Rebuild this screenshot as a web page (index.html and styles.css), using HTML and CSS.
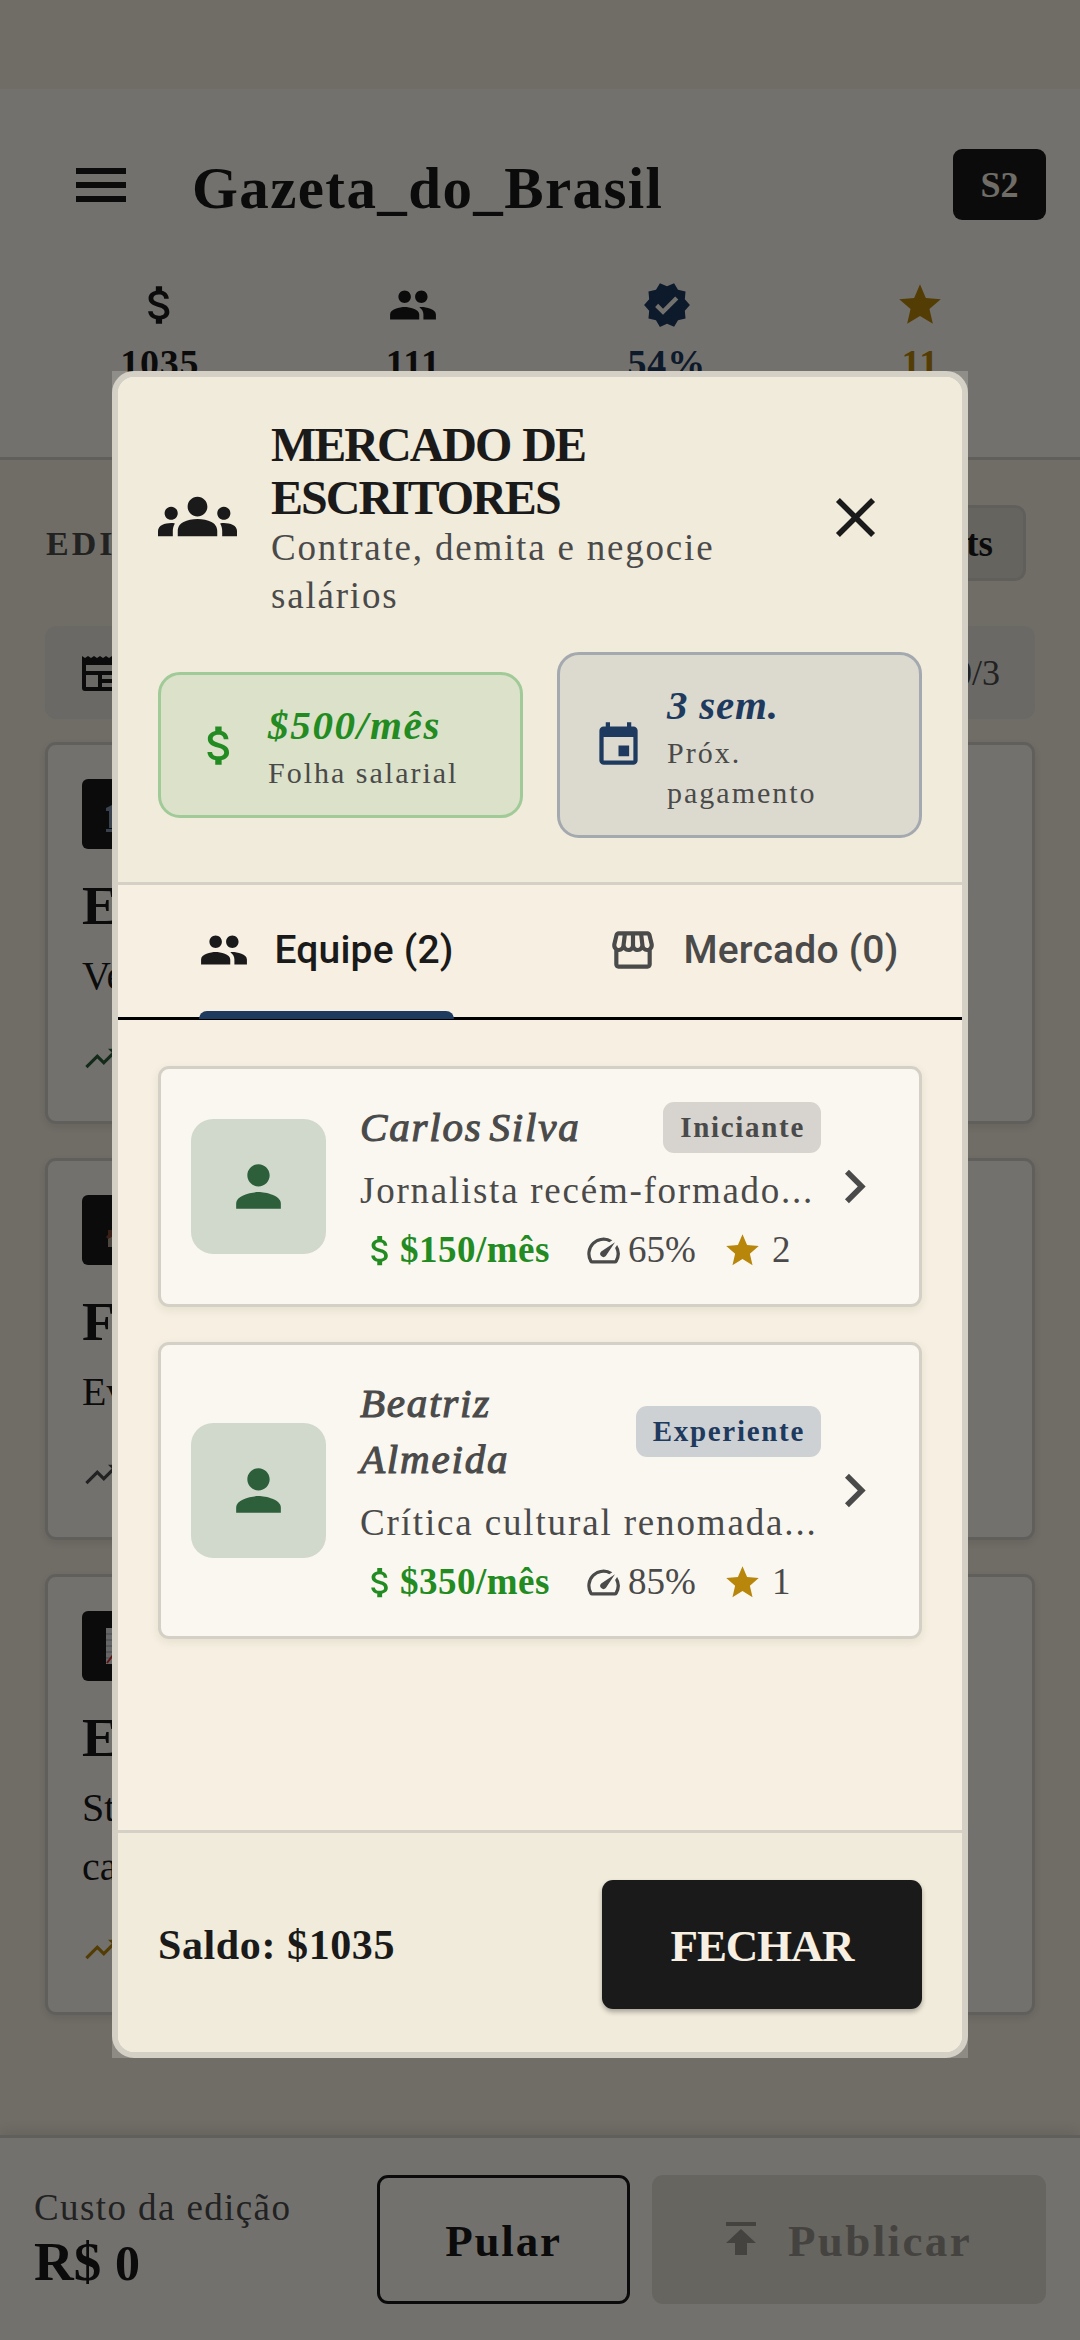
FILE: index.html
```html
<!DOCTYPE html>
<html lang="pt-BR">
<head>
    <meta charset="UTF-8">
    <meta name="viewport" content="width=device-width, initial-scale=1.0">
    <title>Gazeta do Brasil</title>
    <link rel="stylesheet" href="styles.css">
</head>
<body>
    <!-- shared icons -->
    <svg class="sprite" width="0" height="0">
        <symbol id="dollar" viewBox="0 0 24 24"><path d="M11.8 10.9c-2.27-.59-3-1.2-3-2.15 0-1.09 1.01-1.85 2.7-1.85 1.78 0 2.44.85 2.5 2.1h2.21c-.07-1.72-1.12-3.3-3.21-3.81V3h-3v2.16c-1.94.42-3.5 1.68-3.5 3.61 0 2.31 1.91 3.46 4.7 4.13 2.5.6 3 1.48 3 2.41 0 .69-.49 1.79-2.7 1.79-2.06 0-2.87-.92-2.98-2.1h-2.2c.12 2.19 1.76 3.42 3.68 3.83V21h3v-2.15c1.95-.37 3.5-1.5 3.5-3.55 0-2.84-2.43-3.81-4.7-4.4z"/></symbol>
        <symbol id="people" viewBox="0 0 24 24"><path d="M16 11c1.66 0 2.99-1.34 2.99-3S17.66 5 16 5s-3 1.34-3 3 1.34 3 3 3zm-8 0c1.66 0 2.99-1.34 2.99-3S9.66 5 8 5 5 6.34 5 8s1.34 3 3 3zm0 2c-2.33 0-7 1.17-7 3.5V19h14v-2.5c0-2.33-4.67-3.5-7-3.5zm8 0c-.29 0-.62.02-.97.05 1.16.84 1.97 1.97 1.97 3.45V19h6v-2.5c0-2.33-4.67-3.5-7-3.5z"/></symbol>
        <symbol id="star" viewBox="0 0 24 24"><path d="M12 17.27 18.18 21l-1.64-7.03L22 9.24l-7.19-.61L12 2 9.19 8.63 2 9.24l5.46 4.73L5.82 21z"/></symbol>
        <symbol id="trend" viewBox="0 0 24 24"><path d="m16 6 2.29 2.29-4.88 4.88-4-4L2 16.59 3.41 18l6-6 4 4 6.3-6.29L22 12V6z"/></symbol>
        <symbol id="person" viewBox="0 0 24 24"><path d="M12 12c2.21 0 4-1.79 4-4s-1.79-4-4-4-4 1.79-4 4 1.79 4 4 4zm0 2c-2.67 0-8 1.34-8 4v2h16v-2c0-2.66-5.33-4-8-4z"/></symbol>
        <symbol id="chevron" viewBox="0 0 24 24"><path d="M10 6 8.59 7.41 13.17 12l-4.58 4.59L10 18l6-6z"/></symbol>
        <symbol id="speed" viewBox="0 0 24 24"><path d="m20.38 8.57-1.23 1.85a8 8 0 0 1-.22 7.58H5.07A8 8 0 0 1 15.58 6.85l1.85-1.23A10 10 0 0 0 3.35 19a2 2 0 0 0 1.72 1h13.85a2 2 0 0 0 1.74-1 10 10 0 0 0-.27-10.44zm-9.79 6.84a2 2 0 0 0 2.83 0l5.66-8.49-8.49 5.66a2 2 0 0 0 0 2.83z"/></symbol>
    </svg>

    <div class="app">
        <header class="header">
            <div class="topbar">
                <svg class="menu" viewBox="0 0 50 34"><path d="M0 0h50v6H0zM0 14h50v6H0zM0 28h50v6H0z"/></svg>
                <h1>Gazeta_do_Brasil</h1>
                <span class="week">S2</span>
            </div>
            <div class="stats">
                <div class="stat"><svg class="icon"><use href="#dollar"/></svg><span>1035</span></div>
                <div class="stat"><svg class="icon"><use href="#people"/></svg><span>111</span></div>
                <div class="stat blue"><svg class="icon" viewBox="0 0 24 24"><path d="m23 12-2.44-2.79.34-3.69-3.61-.82-1.89-3.2L12 2.96 8.6 1.5 6.71 4.69 3.1 5.5l.34 3.7L1 12l2.44 2.79-.34 3.7 3.61.82L8.6 22.5l3.4-1.47 3.4 1.46 1.89-3.19 3.61-.82-.34-3.69zm-12.91 4.72-3.8-3.81 1.48-1.48 2.32 2.33 5.85-5.87 1.48 1.48z"/></svg><span>54%</span></div>
                <div class="stat gold"><svg class="icon"><use href="#star"/></svg><span>11</span></div>
            </div>
        </header>

        <main class="content">
            <div class="section-head">
                <h2>EDI</h2>
                <span class="drafts">ts</span>
            </div>
            <div class="counter">
                <svg viewBox="0 0 36 36"><path fill-rule="evenodd" d="M0 1l3 2 3-2 3 2 3-2 3 2 3-2 3 2 3-2 3 2 3-2 3 2 3-2v32a3 3 0 0 1-3 3H3a3 3 0 0 1-3-3zM4 10v6h28v-6zM4 20v12h12V20zM20 20v4h12v-4zM20 28v4h12v-4z"/></svg>
                <span>0/3</span>
            </div>
            <article class="story">
                <div class="tag"><svg viewBox="0 0 36 36"><path fill="#7f93a8" d="M0 12 18 3l18 9v3H0zM3 15h7v17H3zM26 15h7v17h-7zM0 33h36v3H0z"/></svg></div>
                <h3>E</h3>
                <p>Ve</p>
                <svg class="trend up"><use href="#trend"/></svg>
            </article>
            <article class="story">
                <div class="tag"><svg viewBox="0 0 36 36"><path fill="#a89c90" d="M2 24h32v11H2z"/><path fill="#7d4630" d="M0 25 10 14h16l10 11-3 2-15-9L2 27zM2 18h4v5H2z"/></svg></div>
                <h3>F</h3>
                <p>Ev</p>
                <svg class="trend flat"><use href="#trend"/></svg>
            </article>
            <article class="story">
                <div class="tag"><svg viewBox="0 0 36 36"><path fill="#e0e0e0" d="M0 0h36v36H0z"/><path fill="none" stroke="#8fa0a8" d="M0 6h36M0 12h36M0 18h36M0 24h36M0 30h36"/><path fill="none" stroke="#d02828" stroke-width="2" d="m1 35 9-12"/></svg></div>
                <h3>E</h3>
                <p>St<br>ca</p>
                <svg class="trend gold"><use href="#trend"/></svg>
            </article>
        </main>

        <footer class="bottombar">
            <div class="cost">
                <span class="cost-label">Custo da edição</span>
                <strong>R$ <span class="oldstyle">0</span></strong>
            </div>
            <button class="btn skip">Pular</button>
            <button class="btn publish">
                <svg class="upload" viewBox="0 0 30 33"><path d="M0 0h30v4H0zM15 7 0 21h9v12h12V21h9z"/></svg>
                <span>Publicar</span>
            </button>
        </footer>
    </div>

    <div class="overlay">
        <div class="modal-frame">
            <section class="modal">
                <div class="modal-header">
                    <div class="modal-title">
                        <svg class="groups" viewBox="0 0 24 24"><path d="M12 12.75c1.63 0 3.07.39 4.24.9 1.08.48 1.76 1.56 1.76 2.73V18H6v-1.61c0-1.18.68-2.26 1.76-2.73 1.17-.52 2.61-.91 4.24-.91zM4 13c1.1 0 2-.9 2-2s-.9-2-2-2-2 .9-2 2 .9 2 2 2zm1.13 1.1c-.37-.06-.74-.1-1.13-.1-.99 0-1.93.21-2.78.58C.48 14.9 0 15.62 0 16.43V18h4.5v-1.61c0-.83.23-1.61.63-2.29zM20 13c1.1 0 2-.9 2-2s-.9-2-2-2-2 .9-2 2 .9 2 2 2zm4 3.43c0-.81-.48-1.53-1.22-1.85-.85-.37-1.79-.58-2.78-.58-.39 0-.76.04-1.13.1.4.68.63 1.46.63 2.29V18H24zM12 6c1.66 0 3 1.34 3 3s-1.34 3-3 3-3-1.34-3-3 1.34-3 3-3z"/></svg>
                        <div class="heading">
                            <h2>MERCADO DE<br>ESCRITORES</h2>
                            <p>Contrate, demita e negocie<br>salários</p>
                        </div>
                        <svg class="close" viewBox="0 0 24 24"><path d="M19 6.41 17.59 5 12 10.59 6.41 5 5 6.41 10.59 12 5 17.59 6.41 19 12 13.41 17.59 19 19 17.59 13.41 12z"/></svg>
                    </div>
                    <div class="boxes">
                        <div class="box payroll">
                            <svg><use href="#dollar"/></svg>
                            <div><strong>$500/mês</strong><small>Folha salarial</small></div>
                        </div>
                        <div class="box payday">
                            <svg viewBox="0 0 24 24"><path d="M17 12h-5v5h5v-5zM16 1v2H8V1H6v2H5c-1.11 0-1.99.9-1.99 2L3 19c0 1.1.89 2 2 2h14c1.1 0 2-.9 2-2V5c0-1.1-.9-2-2-2h-1V1h-2zm3 18H5V8h14v11z"/></svg>
                            <div><strong>3 sem.</strong><small>Próx.<br>pagamento</small></div>
                        </div>
                    </div>
                </div>

                <nav class="tabs">
                    <div class="tab active"><svg><use href="#people"/></svg><span>Equipe (2)</span></div>
                    <div class="tab"><svg viewBox="0 0 24 24"><path d="M21.9 8.89l-1.05-4.37c-.22-.9-1-1.52-1.91-1.52H5.05c-.9 0-1.69.63-1.9 1.52L2.1 8.89c-.24 1.02-.02 2.06.62 2.88.08.11.19.19.28.29V19c0 1.1.9 2 2 2h14c1.1 0 2-.9 2-2v-6.94c.09-.09.2-.18.28-.28.64-.82.87-1.87.62-2.89zm-2.99-3.9 1.05 4.37c.1.42.01.84-.25 1.17-.14.18-.44.47-.94.47-.61 0-1.14-.49-1.21-1.14L16.98 5l1.93-.01zM13 5h1.96l.54 4.52c.05.39-.07.78-.33 1.07-.22.26-.54.41-.95.41-.67 0-1.22-.59-1.22-1.31V5zM8.49 9.52 9.04 5H11v4.69c0 .72-.55 1.31-1.29 1.31-.34 0-.65-.15-.89-.41-.25-.29-.37-.68-.33-1.07zm-4.45-.16L5.05 5h1.97l-.58 4.86c-.08.65-.6 1.14-1.21 1.14-.49 0-.8-.29-.93-.47-.27-.32-.36-.75-.26-1.17zM5 19v-6.03c.08.01.15.03.23.03.87 0 1.66-.36 2.24-.95.6.6 1.4.95 2.31.95.87 0 1.65-.36 2.23-.93.59.57 1.39.93 2.29.93.84 0 1.64-.35 2.24-.95.58.59 1.37.95 2.24.95.08 0 .15-.02.23-.03V19H5z"/></svg><span>Mercado (0)</span></div>
                </nav>

                <div class="writers">
                    <div class="writer">
                        <div class="avatar"><svg><use href="#person"/></svg></div>
                        <div class="info">
                            <div class="name-row"><h3>Carlos Silva</h3><span class="chip">Iniciante</span></div>
                            <p>Jornalista recém-formado...</p>
                            <div class="meta">
                                <svg class="pay-icon"><use href="#dollar"/></svg><b>$150/mês</b>
                                <svg class="speed-icon"><use href="#speed"/></svg><span class="skill">65%</span>
                                <svg class="star-icon"><use href="#star"/></svg><span>2</span>
                            </div>
                        </div>
                        <svg class="chevron"><use href="#chevron"/></svg>
                    </div>
                    <div class="writer">
                        <div class="avatar"><svg><use href="#person"/></svg></div>
                        <div class="info">
                            <div class="name-row"><h3>Beatriz<br>Almeida</h3><span class="chip senior">Experiente</span></div>
                            <p class="critic">Crítica cultural renomada...</p>
                            <div class="meta">
                                <svg class="pay-icon"><use href="#dollar"/></svg><b>$350/mês</b>
                                <svg class="speed-icon"><use href="#speed"/></svg><span class="skill">85%</span>
                                <svg class="star-icon"><use href="#star"/></svg><span>1</span>
                            </div>
                        </div>
                        <svg class="chevron"><use href="#chevron"/></svg>
                    </div>
                </div>

                <div class="modal-footer">
                    <span class="balance">Saldo: $1035</span>
                    <button class="btn close-btn">FECHAR</button>
                </div>
            </section>
        </div>
    </div>
</body>
</html>
```

FILE: styles.css
```css
* {
    box-sizing: border-box;
    margin: 0;
    padding: 0;
}

body {
    position: relative;
    width: 1080px;
    height: 2340px;
    overflow: hidden;
    background-color: #f5eee1;
    color: #1a1a1a;
    font-family: "Liberation Serif", serif;
    white-space: nowrap;
}

svg {
    display: block;
    flex: none;
    fill: currentColor;
}

.sprite {
    position: absolute;
}

.blue { color: #1e3a5f; }
.gold { color: #b8860b; }

.app {
    display: flex;
    flex-direction: column;
    height: 2340px;
    padding-top: 89px;
}

/* header */
.header {
    height: 371px;
    background-color: #faf7f0;
    border-bottom: 3px solid #d4d0c8;
}

.topbar {
    display: flex;
    align-items: center;
    height: 191px;
    padding: 0 34px 0 76px;
}

.menu {
    width: 50px;
    height: 34px;
}

.topbar h1 {
    margin-left: 66px;
    padding-top: 6px;
    font-size: 59px;
    line-height: 70px;
    letter-spacing: 1.4px;
}

.week {
    width: 93px;
    height: 71px;
    margin-left: auto;
    border-radius: 9px;
    background-color: #1a1a1a;
    color: #f5eee1;
    font-size: 36px;
    font-weight: bold;
    line-height: 73px;
    text-align: center;
}

.stats {
    display: grid;
    grid-template-columns: repeat(4, 1fr);
    padding: 0 33px;
}

.stat {
    display: flex;
    flex-direction: column;
    align-items: center;
}

.icon {
    width: 50px;
    height: 50px;
}

.stat span {
    margin-top: 9px;
    font-size: 38px;
    font-weight: bold;
    line-height: 48px;
    letter-spacing: 0.8px;
}

/* edition screen */
.content {
    flex: 1;
    padding: 45px 45px 0;
}

.section-head {
    display: flex;
    justify-content: space-between;
    align-items: center;
    height: 76px;
    margin-bottom: 45px;
    padding: 0 9px 0 1px;
}

.section-head h2 {
    padding-top: 2px;
    color: #4a4a4a;
    font-size: 34px;
    letter-spacing: 3px;
}

.drafts {
    width: 190px;
    height: 76px;
    padding-right: 30px;
    border: 3px solid #d4d0c8;
    border-radius: 11px;
    background-color: #dedad0;
    font-size: 37px;
    font-weight: bold;
    line-height: 72px;
    text-align: right;
}

.counter {
    display: flex;
    justify-content: space-between;
    align-items: center;
    height: 93px;
    margin-bottom: 23px;
    padding: 0 35px 0 37px;
    border-radius: 11px;
    background-color: #e8e4dc;
    color: #4a4a4a;
    font-size: 36px;
}

.counter svg {
    width: 36px;
    height: 36px;
    color: #1a1a1a;
}

.story {
    height: 382px;
    margin-bottom: 34px;
    padding: 34px;
    border: 3px solid #d4d0c8;
    border-radius: 11px;
    background-color: #faf7f0;
    box-shadow: 0 3px 11px rgba(0, 0, 0, 0.1);
}

.story:last-child {
    height: 441px;
}

.tag {
    display: flex;
    align-items: center;
    width: 160px;
    height: 70px;
    padding-left: 24px;
    border-radius: 6px;
    background-color: #1a1a1a;
}

.tag svg {
    width: 36px;
    height: 36px;
}

.story h3 {
    margin-top: 27px;
    font-size: 55px;
    line-height: 60px;
}

.story p {
    margin-top: 10px;
    font-size: 40px;
    line-height: 59px;
}

.trend {
    width: 39px;
    height: 39px;
    margin-top: 34px;
}

.trend.up { color: #2d5f3a; }
.trend.flat { color: #4a4a4a; }

/* bottom bar */
.bottombar {
    display: flex;
    height: 205px;
    padding: 37px 34px 0;
    border-top: 3px solid #d4d0c8;
    background-color: #faf7f0;
    box-shadow: 0 -4px 16px rgba(0, 0, 0, 0.1);
}

.cost {
    display: flex;
    flex-direction: column;
    width: 343px;
}

.cost-label {
    padding-top: 9px;
    color: #4a4a4a;
    font-size: 37px;
    line-height: 48px;
    letter-spacing: 1.4px;
}

.cost strong {
    font-size: 55px;
    line-height: 60px;
}

.oldstyle {
    font-size: 50px;
    line-height: 1;
}

.btn {
    display: flex;
    justify-content: center;
    align-items: center;
    height: 129px;
    padding-top: 2px;
    border: none;
    border-radius: 11px;
    font: bold 45px/60px "Liberation Serif", serif;
}

.skip {
    width: 253px;
    margin-right: 22px;
    border: 3px solid #1a1a1a;
    background: none;
    color: #1a1a1a;
    letter-spacing: 1.8px;
}

.publish {
    width: 394px;
    gap: 32px;
    background-color: #e0dcd2;
    color: #96938d;
    letter-spacing: 2.4px;
}

.upload {
    width: 30px;
    height: 33px;
    margin-bottom: 4px;
}

/* writers market dialog */
.overlay {
    position: absolute;
    top: 0;
    left: 0;
    width: 1080px;
    height: 2340px;
    padding: 371px 112px 0;
    background-color: rgba(0, 0, 0, 0.54);
}

.modal-frame {
    width: 856px;
    height: 1687px;
    background-color: rgba(212, 208, 200, 0.3);
}

.modal {
    display: flex;
    flex-direction: column;
    height: 100%;
    overflow: hidden;
    border: 6px solid #d4d0c6;
    border-radius: 22px;
    background-color: #f6efe2;
}

.modal-header {
    height: 508px;
    padding: 41px 40px 0;
    border-bottom: 3px solid #d4d0c6;
    background-color: #f1ebdb;
}

.modal-title {
    display: flex;
    align-items: center;
}

.groups {
    width: 79px;
    height: 79px;
    margin-bottom: 5px;
}

.heading {
    width: 530px;
    margin-left: 34px;
}

.heading h2 {
    font-size: 48px;
    line-height: 53px;
    letter-spacing: -2px;
    word-spacing: 2px;
}

.heading p {
    color: #4a4a4a;
    font-size: 37px;
    line-height: 48px;
    letter-spacing: 1.8px;
}

.close {
    width: 67px;
    height: 67px;
    margin-bottom: 4px;
    margin-left: 21px;
}

.boxes {
    display: flex;
    align-items: center;
    gap: 34px;
    margin-top: 32px;
}

.box {
    display: flex;
    align-items: center;
    width: 365px;
    height: 146px;
    padding-left: 33px;
    border: 3px solid #a0ca97;
    border-radius: 22px;
    background-color: #dce1c9;
    color: #228b22;
}

.box svg {
    width: 51px;
    height: 51px;
    margin-right: 23px;
}

.box strong {
    display: block;
    font-size: 41px;
    font-style: italic;
    line-height: 56px;
    letter-spacing: 1.7px;
}

.box small {
    display: block;
    color: #4a4a4a;
    font-size: 30px;
    line-height: 40px;
    letter-spacing: 2px;
}

.payday {
    height: 186px;
    border-color: #a3a9ae;
    background-color: #dcdace;
    color: #1e3a5f;
}

.payday strong {
    letter-spacing: 0.8px;
}

.tabs {
    display: flex;
    height: 135px;
    border-bottom: 3px solid #000;
}

.tab {
    display: flex;
    justify-content: center;
    align-items: center;
    gap: 25px;
    width: 422px;
    padding: 0 0 3px 5px;
    color: #4a4a4a;
    font-family: Roboto, sans-serif;
    font-size: 39px;
    font-weight: 500;
    letter-spacing: 0.2px;
}

.tab svg {
    width: 50px;
    height: 50px;
}

.tab.active {
    position: relative;
    padding: 0 5px 3px 0;
    color: #1a1a1a;
}

.tab.active::after {
    content: "";
    position: absolute;
    bottom: -2px;
    left: 81px;
    width: 255px;
    height: 8px;
    border-radius: 8px 8px 0 0;
    background-color: #1e3a5f;
}

.writers {
    flex: 1;
    padding: 46px 40px 0;
}

.writer {
    display: flex;
    align-items: center;
    margin-bottom: 35px;
    padding: 30px;
    border: 3px solid #d4d0c6;
    border-radius: 11px;
    background-color: #faf7f0;
    box-shadow: 0 3px 10px rgba(60, 80, 0, 0.09);
}

.avatar {
    display: flex;
    justify-content: center;
    align-items: center;
    width: 135px;
    height: 135px;
    border-radius: 22px;
    background-color: #d1d9cc;
    color: #2d5f3a;
}

.avatar svg {
    width: 67px;
    height: 67px;
}

.info {
    width: 461px;
    margin-left: 34px;
    color: #4a4a4a;
}

.name-row {
    display: flex;
    justify-content: space-between;
    align-items: center;
    margin-bottom: 12px;
}

.name-row h3 {
    font-size: 41px;
    font-style: italic;
    font-weight: normal;
    line-height: 56px;
    letter-spacing: 1.8px;
    word-spacing: -5px;
    -webkit-text-stroke: 1.1px #4a4a4a;
}

.chip {
    padding: 0 16px 0 17px;
    border-radius: 11px;
    background-color: #d7d4cf;
    font-size: 29px;
    font-weight: bold;
    line-height: 51px;
    letter-spacing: 1.7px;
}

.senior {
    background-color: #ced1d4;
    color: #1e3a5f;
}

.info p {
    margin-bottom: 11px;
    font-size: 37px;
    line-height: 48px;
    letter-spacing: 1.75px;
}

.info .critic {
    letter-spacing: 1.85px;
}

.meta {
    display: flex;
    align-items: center;
    height: 48px;
    padding-left: 1px;
    font-size: 37px;
    line-height: 48px;
}

.pay-icon,
.speed-icon,
.star-icon {
    width: 39px;
    height: 39px;
}

.pay-icon,
.meta b {
    color: #228b22;
}

.meta b {
    letter-spacing: 0.5px;
}

.speed-icon {
    margin-left: 34px;
    margin-right: 5px;
}

.skill {
    width: 95px;
}

.star-icon {
    margin-right: 10px;
    color: #b8860b;
}

.chevron {
    width: 67px;
    height: 67px;
    color: #4a4a4a;
}

.modal-footer {
    display: flex;
    justify-content: space-between;
    align-items: center;
    height: 222px;
    padding: 4px 40px 0;
    border-top: 3px solid #d4d0c6;
    background-color: #f1ebdb;
}

.balance {
    font-size: 42px;
    font-weight: bold;
    letter-spacing: 0.6px;
}

.close-btn {
    width: 320px;
    background-color: #1a1a1a;
    color: #f6efe2;
    letter-spacing: -1.2px;
    box-shadow: 0 3px 5px rgba(0, 0, 0, 0.3);
}
```
